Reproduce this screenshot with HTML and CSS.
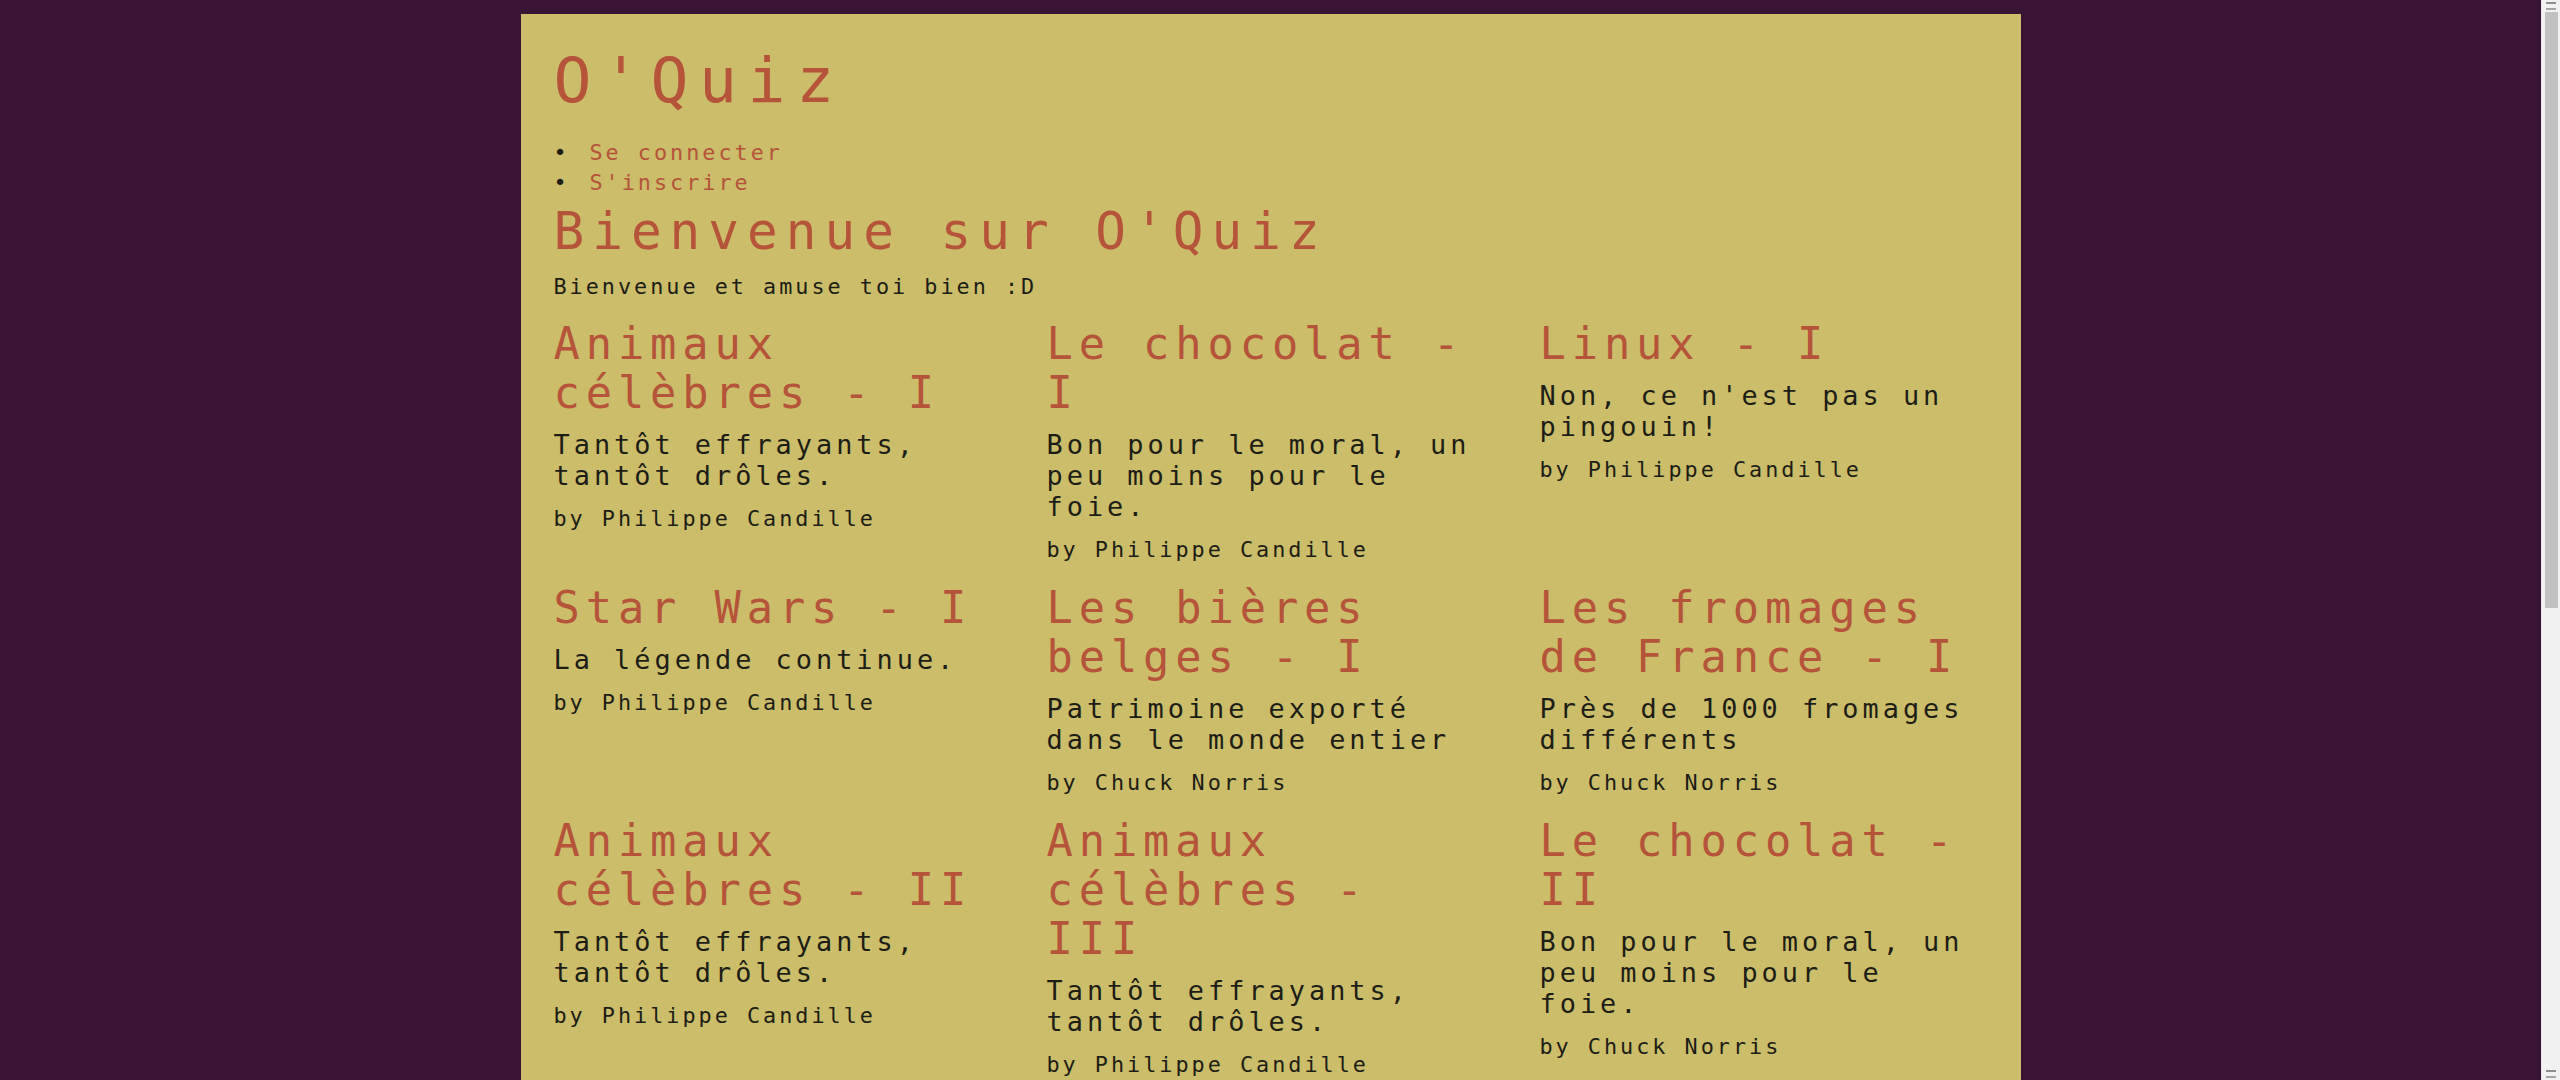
FILE: index.html
```html
<!DOCTYPE html>
<html lang="fr">
<head>
<meta charset="utf-8">
<title>O'Quiz</title>
<link rel="stylesheet" href="styles.css">
</head>
<body>
<div class="page">
  <header>
    <h1 class="site-title">O'Quiz</h1>
    <ul class="nav">
      <li><a href="#">Se connecter</a></li>
      <li><a href="#">S'inscrire</a></li>
    </ul>
  </header>
  <main>
    <h2 class="welcome">Bienvenue sur O'Quiz</h2>
    <p class="intro">Bienvenue et amuse toi bien :D</p>
    <div class="quiz-list">
      <div class="quiz"><h3 class="quiz-title">Animaux célèbres - I</h3><p class="quiz-desc">Tantôt effrayants, tantôt drôles.</p><p class="quiz-author">by Philippe Candille</p></div>
      <div class="quiz"><h3 class="quiz-title">Le chocolat - I</h3><p class="quiz-desc">Bon pour le moral, un peu moins pour le foie.</p><p class="quiz-author">by Philippe Candille</p></div>
      <div class="quiz"><h3 class="quiz-title">Linux - I</h3><p class="quiz-desc">Non, ce n'est pas un pingouin!</p><p class="quiz-author">by Philippe Candille</p></div>
      <div class="quiz"><h3 class="quiz-title">Star Wars - I</h3><p class="quiz-desc">La légende continue.</p><p class="quiz-author">by Philippe Candille</p></div>
      <div class="quiz"><h3 class="quiz-title">Les bières belges - I</h3><p class="quiz-desc">Patrimoine exporté dans le monde entier</p><p class="quiz-author">by Chuck Norris</p></div>
      <div class="quiz"><h3 class="quiz-title">Les fromages de France - I</h3><p class="quiz-desc">Près de 1000 fromages différents</p><p class="quiz-author">by Chuck Norris</p></div>
      <div class="quiz"><h3 class="quiz-title">Animaux célèbres - II</h3><p class="quiz-desc">Tantôt effrayants, tantôt drôles.</p><p class="quiz-author">by Philippe Candille</p></div>
      <div class="quiz"><h3 class="quiz-title">Animaux célèbres - III</h3><p class="quiz-desc">Tantôt effrayants, tantôt drôles.</p><p class="quiz-author">by Philippe Candille</p></div>
      <div class="quiz"><h3 class="quiz-title">Le chocolat - II</h3><p class="quiz-desc">Bon pour le moral, un peu moins pour le foie.</p><p class="quiz-author">by Chuck Norris</p></div>
    </div>
  </main>
</div>
<div class="scrollbar" aria-hidden="true">
  <span class="scroll-arrow"></span>
  <span class="scroll-thumb"></span>
  <span class="scroll-space"></span>
  <span class="scroll-arrow"></span>
</div>
</body>
</html>
```
FILE: styles.css
```css
html, body {
  margin: 0;
  padding: 0;
}

body {
  background: #391334;
  font-family: "DejaVu Sans Mono", monospace;
  color: #1d1d17;
  padding-right: 19px;
}

.page {
  width: 1500px;
  margin: 14px auto 0;
  padding: 30px 33px 40px;
  box-sizing: border-box;
  background: #cbbd69;
}

.site-title {
  margin: 0;
  font-size: 63px;
  letter-spacing: 10.6px;
  line-height: 73px;
  font-weight: normal;
  color: #b5533b;
}

.nav {
  margin: 21px 0 0;
  padding: 0;
  list-style: none;
  font-size: 21.8px;
  letter-spacing: 3px;
  line-height: 29.5px;
  color: #1d1d17;
}

.nav li::before {
  content: "•";
  display: inline-block;
  width: 36px;
  letter-spacing: 0;
}

.nav a {
  color: #b5533b;
  text-decoration: none;
}

.welcome {
  margin: 5px 0 0;
  font-size: 51px;
  letter-spacing: 8px;
  line-height: 59px;
  font-weight: normal;
  color: #b5533b;
}

.intro {
  margin: 13px 0 0;
  font-size: 21.8px;
  letter-spacing: 3px;
  line-height: 25px;
}

.quiz-list {
  display: grid;
  grid-template-columns: repeat(3, 448px);
  column-gap: 45px;
  row-gap: 21px;
  margin-top: 20px;
  align-items: start;
}

.quiz-title {
  margin: 0;
  font-size: 43.7px;
  letter-spacing: 5.9px;
  line-height: 49px;
  font-weight: normal;
  color: #b5533b;
}

.quiz-desc {
  margin: 12px 0 0;
  font-size: 26.9px;
  letter-spacing: 4px;
  line-height: 31px;
}

.quiz-author {
  margin: 15px 0 0;
  font-size: 21.8px;
  letter-spacing: 3px;
  line-height: 25px;
}

/* window scrollbar, drawn over the right edge */
.scrollbar {
  position: fixed;
  top: 0;
  right: 0;
  bottom: 0;
  width: 19px;
  display: flex;
  flex-direction: column;
  align-items: center;
  background: #f1f1f1;
  border-left: 1px solid #e6e6e6;
  box-sizing: border-box;
}

.scroll-arrow {
  height: 8px;
  width: 10px;
  margin: 2px 0;
  border-top: 2px solid #8e8e8e;
  border-bottom: 2px solid #a5a5a5;
  box-sizing: border-box;
  flex: none;
}

.scroll-thumb {
  width: 13px;
  height: 596px;
  background: #c1c1c1;
  flex: none;
}

.scroll-space {
  flex: 1;
}
```
